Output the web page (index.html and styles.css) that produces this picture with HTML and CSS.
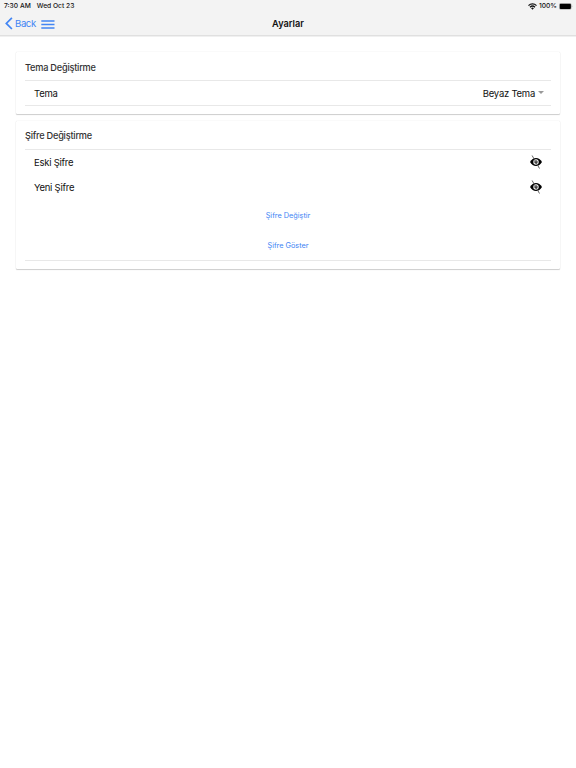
FILE: index.html
```html
<!DOCTYPE html>
<html lang="tr">
<head>
<meta charset="utf-8">
<title>Ayarlar</title>
<link rel="stylesheet" href="styles.css">
</head>
<body>
<header class="header">
  <div class="status">
    <span class="time">7:30 AM</span>
    <span class="date">Wed Oct 23</span>
    <svg class="wifi" width="9" height="7" viewBox="0 0 9 7" fill="none" stroke="#111" stroke-width="1.3"><path d="M.5 2.6a5.7 5.7 0 0 1 8 0M2 4.2a3.6 3.6 0 0 1 5 0"/><path d="M3.1 5.2a2 2 0 0 1 2.8 0L4.5 6.7z" fill="#111" stroke="none"/></svg>
    <span class="percent">100%</span>
    <svg class="battery" width="14" height="7" viewBox="0 0 14 7"><rect x=".3" y=".3" width="12" height="6.2" rx="1.5" fill="none" stroke="#999" stroke-width=".5"/><rect x=".7" y=".8" width="11.2" height="5.2" rx=".9" fill="#000"/><path d="M12.8 2.2q1 1 0 2z" fill="#777"/></svg>
  </div>
  <nav class="toolbar">
    <a class="back"><svg width="8" height="13" viewBox="0 0 8 13" fill="none" stroke="#4285f4" stroke-width="1.7"><path d="M6.9.8 1.3 6.4l5.6 5.6"/></svg><span>Back</span></a>
    <svg class="menu" width="14" height="9" viewBox="0 0 14 9" stroke="#4285f4" stroke-width="1.3"><path d="M.3 1h13.2M.3 4.5h13.2M.3 8h13.2"/></svg>
    <h1 class="title">Ayarlar</h1>
  </nav>
</header>
<main class="content">
  <section class="card theme">
    <h2 class="card-title">Tema Değiştirme</h2>
    <div class="list">
      <div class="row"><span class="tema">Tema</span><span class="select"><span>Beyaz Tema</span><i class="caret"></i></span></div>
    </div>
  </section>
  <section class="card password">
    <h2 class="card-title sifre">Şifre Değiştirme</h2>
    <div class="list">
      <div class="row"><span class="field">Eski Şifre</span><svg class="eye" width="14" height="14" viewBox="0 0 14 14"><path d="M1 7q2.4-3.9 6-3.9T13 7q-2.4 3.9-6 3.9T1 7z" fill="#000"/><circle cx="7" cy="7" r="2.7" fill="#fff"/><circle cx="7" cy="7" r="1.7" fill="#333"/><path d="M6 5.4 7.1 7" stroke="#fff" stroke-width=".8"/><path d="M3.1.5l7.4 13" stroke="#555" stroke-width=".9"/></svg></div>
      <div class="row"><span class="field">Yeni Şifre</span><svg class="eye" width="14" height="14" viewBox="0 0 14 14"><path d="M1 7q2.4-3.9 6-3.9T13 7q-2.4 3.9-6 3.9T1 7z" fill="#000"/><circle cx="7" cy="7" r="2.7" fill="#fff"/><circle cx="7" cy="7" r="1.7" fill="#333"/><path d="M6 5.4 7.1 7" stroke="#fff" stroke-width=".8"/><path d="M3.1.5l7.4 13" stroke="#555" stroke-width=".9"/></svg></div>
      <a class="action">Şifre Değiştir</a>
      <a class="action">Şifre Göster</a>
    </div>
  </section>
</main>
</body>
</html>
```
FILE: styles.css
```css
* { box-sizing: border-box; }
body {
  margin: 0;
  min-height: 768px;
  background: #fff;
  color: #111;
  font: 9.5px/12px Inter, "Liberation Sans", sans-serif;
}
.header { height: 37px; background: #f3f3f3; border-bottom: 1px solid #f0f0f0; box-shadow: inset 0 -1px #e0e0e0; }
.status {
  display: flex;
  align-items: center;
  height: 12px;
  padding: 0 3px 0 4px;
  font-size: 6.7px;
  font-weight: 500;
}
.date { margin-left: 6px; }
.wifi { margin-left: auto; }
.percent { margin: 0 2px 0 2px; }
.toolbar {
  display: grid;
  grid-template-columns: 35px 1fr auto 1fr 40px;
  align-items: center;
  height: 24px;
  padding-left: 5px;
}
.back { display: flex; align-items: center; gap: 2px; color: #4285f4; font-size: 9.6px; letter-spacing: -.4px; }
.back svg { position: relative; top: -1px; }
.menu { display: block; margin-left: .7px; }
.title { margin: 0; font-size: 9.2px; line-height: 12px; font-weight: 600; }
.content { display: flex; flex-direction: column; gap: 7px; padding: 15px 16px; }
.card {
  padding: 0 9px 8px;
  border-radius: 1px;
  background: #fff;
  box-shadow: 0 1px 1px rgba(0, 0, 0, .18), 0 0 1px rgba(0, 0, 0, .2);
}
.theme { height: 62px; }
.password { height: 148px; }
.card-title { margin: 0; height: 28px; line-height: 30px; font-size: 9.2px; font-weight: 500; letter-spacing: -.23px; color: #333; }
.theme .card-title { line-height: 31px; }
.list { border-top: 1px solid #e8e8e8; border-bottom: 1px solid #e8e8e8; }
.row { display: flex; align-items: center; justify-content: space-between; height: 24px; padding: 0 8px 0 9px; letter-spacing: -.25px; }
.theme .row { padding: 1px 7px 0 9px; }
.select { display: flex; align-items: center; gap: 3px; }
.caret { margin-top: -3px; border: 3px solid transparent; border-top-color: #999; border-bottom: 0; }
.password .row { height: 25px; }
.eye { margin-top: -1px; }
.action { display: block; height: 30px; line-height: 31px; text-align: center; color: #4285f4; font-size: 7.3px; }
```
